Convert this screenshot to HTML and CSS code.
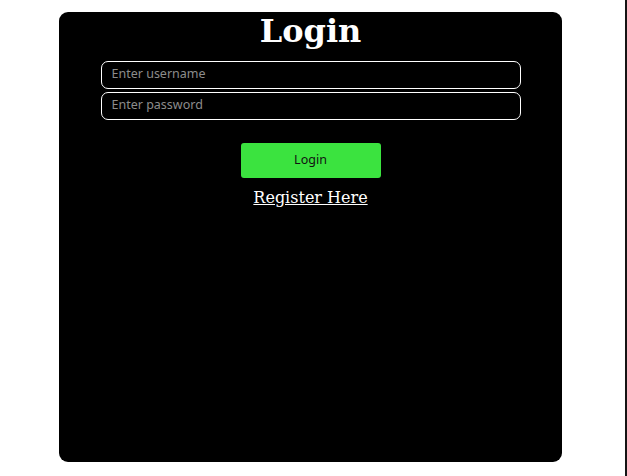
FILE: index.html
```html
<!DOCTYPE html>
<html>
<head>
<meta charset="utf-8">
<link rel="stylesheet" href="styles.css">
</head>
<body>
<div class="page">
  <form class="card">
    <h1 class="title">Login</h1>
    <input class="field" type="text" placeholder="Enter username">
    <input class="field" type="password" placeholder="Enter password">
    <button class="btn" type="button">Login</button>
    <a class="register" href="#">Register Here</a>
  </form>
</div>
</body>
</html>
```

FILE: styles.css
```css
html, body {
  margin: 0;
  padding: 0;
  background: #ffffff;
}
body {
  height: 476px;
  box-sizing: border-box;
  border-right: 2px solid #151515;
  overflow: hidden;
}
.page {
  padding: 12px 0 0 59px;
}
.card {
  width: 503px;
  height: 450px;
  background: #000000;
  border-radius: 9px;
  display: flex;
  flex-direction: column;
  align-items: center;
  box-sizing: border-box;
}
.title {
  margin: 0;
  font-family: "DejaVu Serif", serif;
  font-weight: bold;
  font-size: 32px;
  line-height: 38px;
  color: #ffffff;
  height: 49px;
}
.field {
  width: 420px;
  height: 28px;
  box-sizing: border-box;
  background: #000000;
  border: 1px solid #ffffff;
  border-radius: 7px;
  padding: 0 10px 4px 10px;
  margin: 0 0 3px 0;
  font-family: "Noto Sans", sans-serif;
  font-size: 12.5px;
  color: #ffffff;
  outline: none;
}
.field::placeholder {
  color: #8c8c8c;
}
.btn {
  margin-top: 20px;
  width: 140px;
  height: 35px;
  border: none;
  border-radius: 3px;
  background: #3be33f;
  color: #111111;
  font-family: "Noto Sans", sans-serif;
  font-size: 12.5px;
  padding: 0 0 3px 0;
  cursor: pointer;
}
.register {
  margin-top: 10px;
  font-family: "DejaVu Serif", serif;
  font-size: 16px;
  color: #ffffff;
  text-decoration: underline;
}
```
